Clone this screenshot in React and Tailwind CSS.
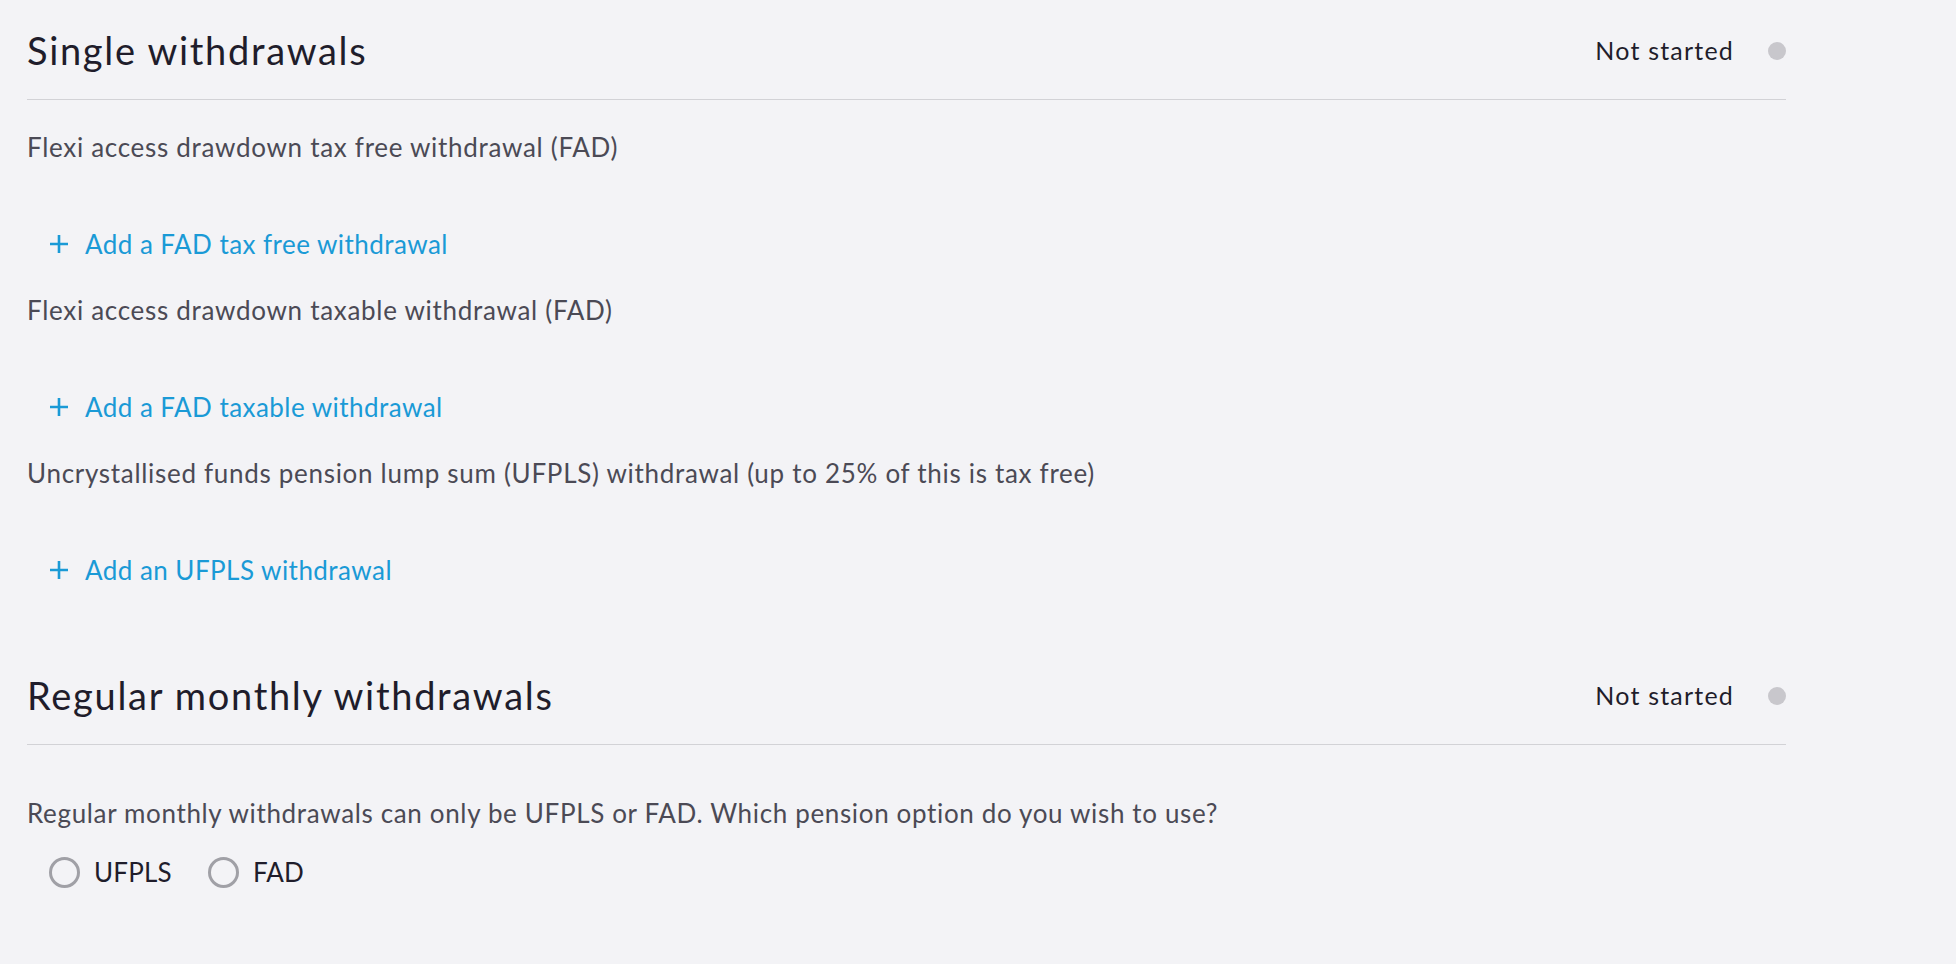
import React, { useState } from "react";

const font = { fontFamily: "Lato, 'Open Sans', sans-serif" };

const SectionHeader = ({ title, status }) => (
  <div className="flex h-[100px] items-center justify-between border-b border-[#d2d2d6] pt-[2px]">
    <h2 className="text-[38px] font-normal tracking-[1.7px] text-[#1f1d2b]">{title}</h2>
    <div className="flex items-center gap-[34px]">
      <span className="text-[25px] tracking-[1.2px] text-[#1f1d2b]">{status}</span>
      <span className="h-[18px] w-[18px] rounded-full bg-[#c8c7cc]" />
    </div>
  </div>
);

const AddLink = ({ label }) => (
  <button className="flex h-[32px] items-center gap-[16px] pl-[22px] text-[26px] tracking-[0.45px] text-[#1a9ad6]">
    <svg width="20" height="20" viewBox="0 0 20 20" fill="none" stroke="currentColor" strokeWidth="2.6">
      <path d="M10 1v18M1 10h18" />
    </svg>
    {label}
  </button>
);

const App = () => {
  const [option, setOption] = useState(null);

  /* ================= SINGLE WITHDRAWAL ROWS ================= */
  const rows = [
    {
      label: "Flexi access drawdown tax free withdrawal (FAD)",
      link: "Add a FAD tax free withdrawal",
    },
    {
      label: "Flexi access drawdown taxable withdrawal (FAD)",
      link: "Add a FAD taxable withdrawal",
    },
    {
      label:
        "Uncrystallised funds pension lump sum (UFPLS) withdrawal (up to 25% of this is tax free)",
      link: "Add an UFPLS withdrawal",
    },
  ];

  return (
    <div className="min-h-screen bg-[#f3f3f6]" style={font}>
      <div className="w-[1786px] pl-[27px]">
        {/* Single withdrawals */}
        <SectionHeader title="Single withdrawals" status="Not started" />

        <div className="flex flex-col pt-[31px]">
          {rows.map((r) => (
            <div key={r.link} className="flex flex-col pb-[34px]">
              <p className="h-[32px] text-[26px] leading-[32px] tracking-[0.7px] text-[#4b4a55]">{r.label}</p>
              <div className="pt-[65px]">
                <AddLink label={r.link} />
              </div>
            </div>
          ))}
        </div>

        {/* Regular monthly withdrawals */}
        <div className="mt-[25px]">
          <SectionHeader title="Regular monthly withdrawals" status="Not started" />
        </div>

        <p className="mt-[52px] text-[26px] leading-[32px] tracking-[0.65px] text-[#4b4a55]">
          Regular monthly withdrawals can only be UFPLS or FAD. Which pension option do you wish to use?
        </p>

        <div className="mt-[27px] flex items-center gap-[36px] pl-[22px]">
          {["UFPLS", "FAD"].map((o) => (
            <label key={o} className="flex cursor-pointer items-center gap-[14px]" onClick={() => setOption(o)}>
              <span className="flex h-[31px] w-[31px] items-center justify-center rounded-full border-[3px] border-[#a0a0a6]">
                {option === o && <span className="h-[15px] w-[15px] rounded-full bg-[#1a9ad6]" />}
              </span>
              <span className="text-[26px] leading-[32px] tracking-[0.2px] text-[#1f1d2b]">{o}</span>
            </label>
          ))}
        </div>
      </div>
    </div>
  );
};

export default App;
